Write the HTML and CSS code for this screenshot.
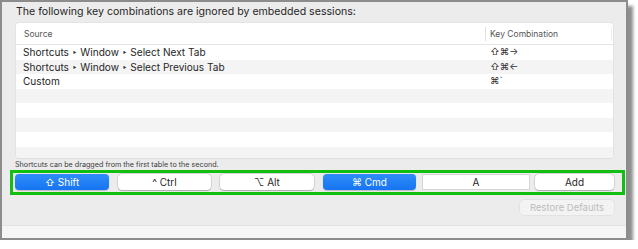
FILE: index.html
```html
<!DOCTYPE html>
<html>
<head>
<meta charset="utf-8">
<link rel="stylesheet" href="styles.css">
</head>
<body>
<div class="window">
  <div class="content">
    <div class="title">The following key combinations are ignored by embedded sessions:</div>
    <div class="table">
      <div class="row head">
        <div class="c1">Source</div>
        <div class="c2">Key Combination</div>
      </div>
      <div class="row"><div class="c1">Shortcuts ‣ Window ‣ Select Next Tab</div><div class="c2">⇧⌘→</div></div>
      <div class="row alt"><div class="c1">Shortcuts ‣ Window ‣ Select Previous Tab</div><div class="c2">⇧⌘←</div></div>
      <div class="row"><div class="c1">Custom</div><div class="c2">⌘`</div></div>
      <div class="row alt"></div>
      <div class="row"></div>
      <div class="row alt"></div>
      <div class="row"></div>
      <div class="row alt"></div>
    </div>
    <div class="caption">Shortcuts can be dragged from the first table to the second.</div>
    <div class="keys">
      <div class="btn on w94">⇧ Shift</div>
      <div class="btn w93">^ Ctrl</div>
      <div class="btn w94">⌥ Alt</div>
      <div class="btn on w93">⌘ Cmd</div>
      <div class="field">A</div>
      <div class="btn add">Add</div>
    </div>
    <div class="restore-row"><div class="restore">Restore Defaults</div></div>
  </div>
  <div class="footer"></div>
</div>
</body>
</html>
```
FILE: styles.css
```css
html, body { margin: 0; padding: 0; background: #ffffff; }
body { font-family: Inter, "Liberation Sans", sans-serif; color: #262626; }

.window {
  box-sizing: border-box;
  width: 628px;
  height: 240px;
  border: 2px solid #8c8c8c;
  background: #ececec;
  box-shadow: 5px 6px 3px rgba(50, 50, 50, 0.55);
  display: flex;
  flex-direction: column;
}
.content { flex: 1; padding: 1px 13px 0 14px; }

.title { font-size: 10.6px; line-height: 13px; height: 13px; margin: 2px 0 5px; color: #262626; white-space: nowrap; }

.table {
  background: #ffffff;
  height: 135px;
  border-radius: 3px;
  overflow: hidden;
  box-shadow: 0 0 0 0.5px #dcdcdc, 0 1px 1px rgba(0,0,0,0.06);
}
.row { display: flex; height: 14.5px; font-size: 10.1px; line-height: 14.5px; color: #262626; }
.row.alt { background: #f4f4f5; }
.row .c1 { width: 465px; padding-left: 7px; white-space: nowrap; }
.row .c2 { flex: 1; padding-left: 2px; font-size: 9.5px; color: #333; }
.row.head { height: 21px; line-height: 21px; font-size: 8.5px; color: #555; border-bottom: 1px solid #e4e4e4; }
.row.head .c1 { padding-left: 8px; width: 461px; border-right: 1px solid #e2e2e2; height: 14px; line-height: 14px; margin-top: 4px; }
.row.head .c2 { padding-left: 4px; height: 14px; line-height: 14px; margin-top: 4px; border-right: 1px solid #ededed; margin-right: 1px; font-size: 8.5px; color: #555; }

.caption { font-size: 7.2px; line-height: 10px; height: 10px; margin: 2px 0 0 -1px; color: #3b3b3b; white-space: nowrap; }

.keys {
  display: flex;
  margin: 0 0 0 -6px;
  width: 604px;
  border: 3px solid #10bf10;
  padding: 1px 3px 0 2px;
  box-sizing: content-box;
  height: 18px;
}
.btn {
  height: 16px;
  box-sizing: border-box;
  border-radius: 4px;
  background: #ffffff;
  box-shadow: 0 0 0 0.5px rgba(0,0,0,0.18), 0 0.5px 1px rgba(0,0,0,0.2);
  font-size: 10px;
  line-height: 16px;
  text-align: center;
  color: #262626;
  margin-right: 9px;
}
.btn.on { background: linear-gradient(#2f8dfa, #1674f2); color: #ffffff; box-shadow: 0 0.5px 1px rgba(0,0,0,0.2); }
.w94 { width: 94px; }
.w93 { width: 93px; }
.keys .btn:nth-child(4) { margin-right: 6px; }
.field {
  width: 108px; height: 16px; box-sizing: border-box;
  background: #ffffff;
  border: 1px solid #d6d6d6;
  font-size: 10px; line-height: 14px; text-align: center; color: #262626;
  margin-right: 5px;
}
.btn.add { width: 79px; margin-right: 0; }

.restore-row { display: flex; justify-content: flex-end; margin-top: 5px; }
.restore {
  width: 94px; height: 15px; box-sizing: border-box;
  margin-right: -1px;
  border-radius: 4px;
  background: #f3f3f3;
  box-shadow: 0 0 0 0.5px rgba(0,0,0,0.07);
  font-size: 9.5px; line-height: 15px; text-align: center; color: #bcbcc0;
}

.footer { height: 12px; background: #f5f5f5; border-top: 1px solid #e2e2e2; }
```
